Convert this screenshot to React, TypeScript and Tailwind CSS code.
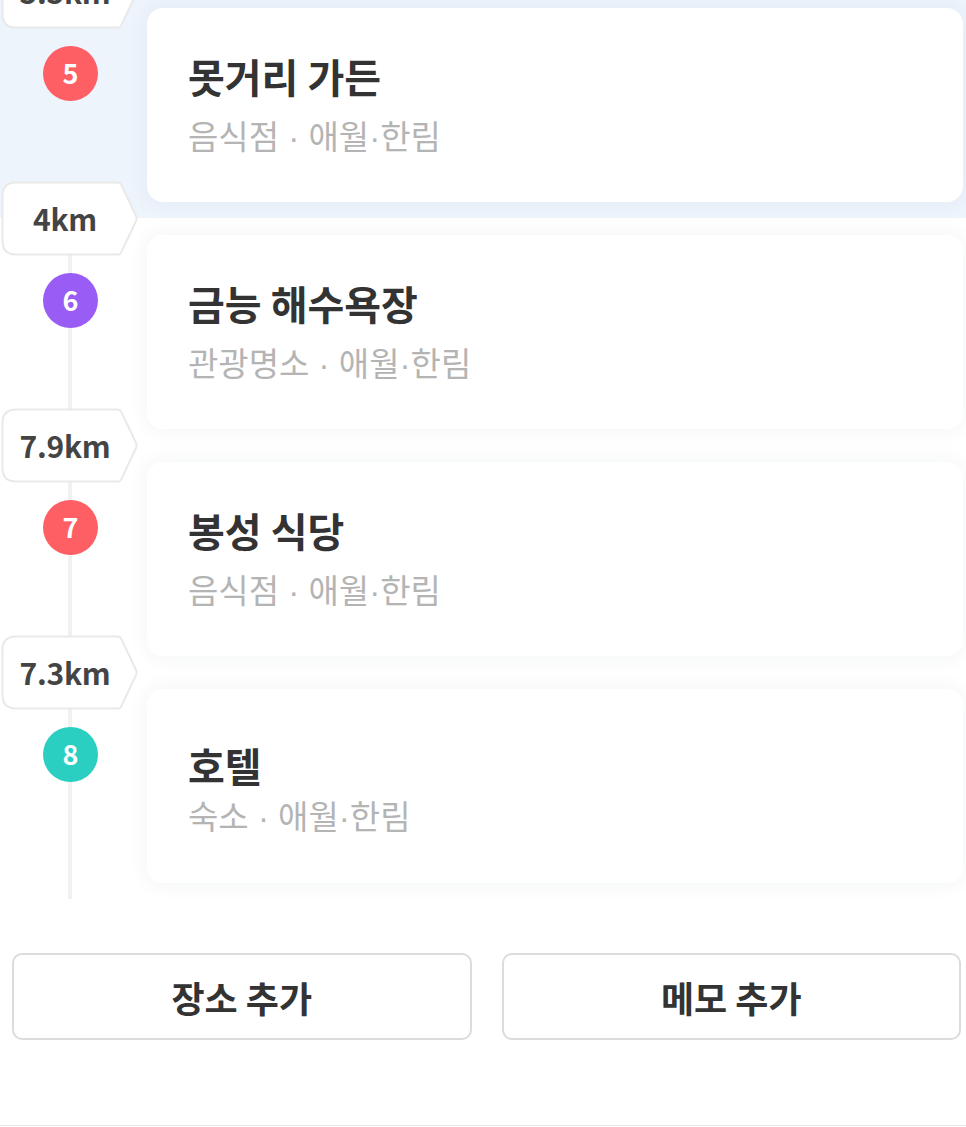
import React from 'react';

type Stop = {
  no: number;
  name: string;
  category: string;
  area: [string, string];
  color: string;
  distance: string;
  active?: boolean;
  tight?: boolean;
};

const stops: Stop[] = [
  { no: 5, name: '못거리 가든', category: '음식점', area: ['애월', '한림'], color: 'bg-[#fe5f65]', distance: '5.5km', active: true },
  { no: 6, name: '금능 해수욕장', category: '관광명소', area: ['애월', '한림'], color: 'bg-[#995df6]', distance: '4km' },
  { no: 7, name: '봉성 식당', category: '음식점', area: ['애월', '한림'], color: 'bg-[#fe5f65]', distance: '7.9km' },
  { no: 8, name: '호텔', category: '숙소', area: ['애월', '한림'], color: 'bg-[#2acfc1]', distance: '7.3km', tight: true },
];

function DistanceTag({ label }: { label: string }) {
  return (
    <div className="absolute left-[1px] top-[-37px] z-10 w-[138px] h-[75px]">
      <svg width="138" height="75" viewBox="0 0 138 75" className="absolute inset-0">
        <path
          d="M15 1.5 H117 Q119 1.5 120.2 3.6 L135.2 35.4 Q136 37.5 135.2 39.6 L120.2 71.4 Q119 73.5 117 73.5 H15 Q1.5 73.5 1.5 60 V15 Q1.5 1.5 15 1.5 Z"
          fill="#ffffff"
          stroke="#e9e9e9"
          strokeWidth="2"
        />
      </svg>
      <div className="relative w-[128px] h-full flex items-center justify-center text-[30px] font-bold text-[#444] tracking-[-0.2px]">
        {label}
      </div>
    </div>
  );
}

function StopRow({ stop }: { stop: Stop }) {
  return (
    <div className={`relative h-[227px] flex pt-[17px] pb-[16px] pr-[3px] ${stop.active ? 'bg-[#eef4fc]' : ''}`}>
      <DistanceTag label={stop.distance} />
      <div className="w-[147px] shrink-0 flex justify-center pr-[6px] pt-[38px]">
        <div className={`relative z-10 w-[55px] h-[55px] rounded-full ${stop.color} flex items-center justify-center text-white text-[27px] font-bold`}>
          {stop.no}
        </div>
      </div>
      <div
        className={`flex-1 bg-white rounded-[16px] pl-[41px] shadow-[0_0_22px_rgba(30,50,90,0.06)] ${stop.tight ? 'pt-[51px]' : 'pt-[43px]'}`}
      >
        <div className="text-[40px] leading-[50px] font-bold text-[#333]">{stop.name}</div>
        <div className={`text-[33px] leading-[42px] text-[#b4b4b4] ${stop.tight ? 'mt-[4px]' : 'mt-[13px]'}`}>
          {stop.category}
          <span className="font-['Liberation_Sans',sans-serif]"> · </span>
          {stop.area[0]}
          <span className="font-['Liberation_Sans',sans-serif]">·</span>
          {stop.area[1]}
        </div>
      </div>
    </div>
  );
}

export default function App() {
  return (
    <div className="relative w-[966px] h-[1127px] overflow-hidden bg-white font-['Noto_Sans_CJK_KR','Noto_Sans',sans-serif]">
      <div className="relative mt-[-9px]">
        <div className="absolute left-[68px] top-0 bottom-0 w-[4px] bg-[#f1f1f1]" />
        {stops.map((s) => (
          <StopRow key={s.no} stop={s} />
        ))}
      </div>

      <div className="flex gap-[30px] pl-[12px] pr-[5px] mt-[54px]">
        <button className="flex-1 h-[87px] rounded-[10px] border-2 border-[#dcdcdc] bg-white text-[36px] font-bold text-[#333]">
          장소 추가
        </button>
        <button className="flex-1 h-[87px] rounded-[10px] border-2 border-[#dcdcdc] bg-white text-[36px] font-bold text-[#333]">
          메모 추가
        </button>
      </div>

      <div className="absolute left-0 right-0 top-[1125px] h-[1px] bg-[#e6e6e6]" />
    </div>
  );
}
